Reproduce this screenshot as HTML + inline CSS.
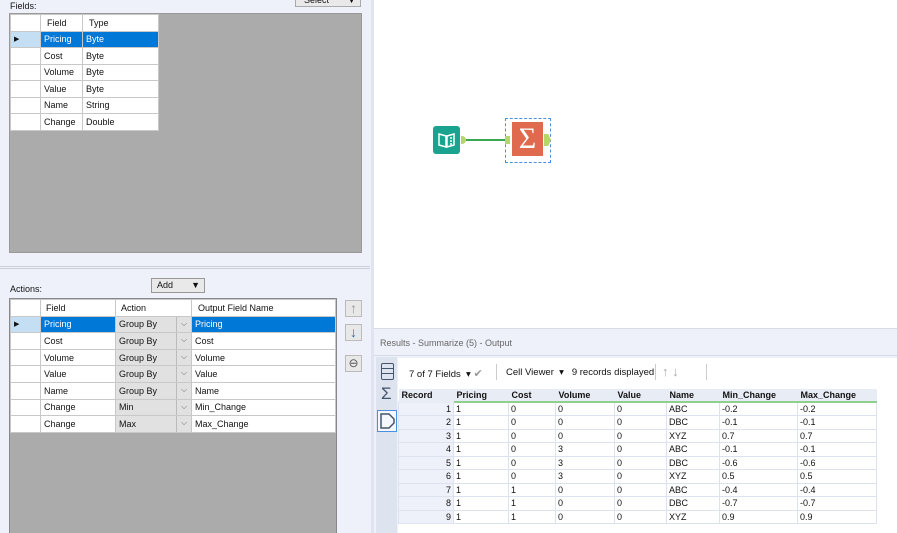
<!DOCTYPE html>
<html style="width:897px;height:533px;overflow:hidden"><head><style>
*{margin:0;padding:0;box-sizing:border-box}
body{width:897px;height:533px;overflow:hidden;position:relative;background:#fff;font-family:"Liberation Sans",sans-serif;font-size:9px;color:#111}
.abs{position:absolute}
table{border-collapse:collapse;position:absolute;font-size:9px}
td{border:1px solid #c8c8c8;padding:0 3px;white-space:nowrap;overflow:hidden;background:#fff}
.sel td.c{background:#0078d7;color:#fff}
.rh{background:#fff;border-color:#c8c8c8}
.dd{background:#e1e1e1;position:relative}
.dd:after{content:"⌵";position:absolute;right:0;top:0;width:14px;height:100%;border-left:1px solid #bbb;text-align:center;color:#666;font-size:8px;line-height:13px}
.rt td{border:1px solid #dce3ef;height:13.5px;line-height:12px;padding:0 2px}
.rt th{font-weight:bold;text-align:left;padding:0 3px;border-bottom:2px solid #8fd08f;background:#e8ecf4;height:13px}
</style></head><body>
<div class="abs" style="left:0;top:0;width:372px;height:533px;background:#eef1f9"></div>
<div class="abs" style="left:371px;top:0;width:3px;height:533px;background:#dfe4ef"></div>
<div class="abs" style="left:10px;top:1px">Fields:</div>
<div class="abs" style="left:295px;top:-6px;width:66px;height:13px;background:#e9e9e9;border:1px solid #aaa;padding-left:8px;line-height:11px">Select <span style="float:right;margin-right:4px">▼</span></div>
<div class="abs" style="left:9px;top:13px;width:353px;height:240px;background:#ababab;border:1px solid #999"></div>
<table style="left:10px;top:14px;width:149px">
<tr style="height:16.5px"><td class="rh" style="width:30px"></td><td style="width:42px;padding-left:6px">Field</td><td style="padding-left:6px">Type</td></tr>
<tr class="sel" style="height:16.5px"><td class="rh" style="background:#c4def4;font-size:7px">▶</td><td class="c">Pricing</td><td class="c">Byte</td></tr>
<tr style="height:16.5px"><td class="rh"></td><td>Cost</td><td>Byte</td></tr>
<tr style="height:16.5px"><td class="rh"></td><td>Volume</td><td>Byte</td></tr>
<tr style="height:16.5px"><td class="rh"></td><td>Value</td><td>Byte</td></tr>
<tr style="height:16.5px"><td class="rh"></td><td>Name</td><td>String</td></tr>
<tr style="height:16.5px"><td class="rh"></td><td>Change</td><td>Double</td></tr>
</table>
<div class="abs" style="left:0;top:266px;width:370px;height:3px;border-top:1px solid #c9ced8;border-bottom:1px solid #c9ced8"></div>
<div class="abs" style="left:10px;top:284px">Actions:</div>
<div class="abs" style="left:151px;top:278px;width:54px;height:15px;background:#e9e9e9;border:1px solid #999;padding-left:5px;line-height:13px">Add <span style="float:right;margin-right:4px">▼</span></div>
<div class="abs" style="left:9px;top:298px;width:328px;height:235px;background:#ababab;border:1px solid #888;border-bottom:none"></div>
<table style="left:10px;top:299px;width:326px">
<tr style="height:16.6px"><td class="rh" style="width:30px"></td><td style="width:75px;padding-left:5px">Field</td><td style="width:76px;padding-left:5px">Action</td><td style="padding-left:6px">Output Field Name</td></tr>
<tr class="sel" style="height:16.6px"><td class="rh" style="background:#c4def4;font-size:7px">▶</td><td class="c">Pricing</td><td class="dd">Group By</td><td class="c">Pricing</td></tr>
<tr style="height:16.6px"><td class="rh"></td><td>Cost</td><td class="dd">Group By</td><td>Cost</td></tr>
<tr style="height:16.6px"><td class="rh"></td><td>Volume</td><td class="dd">Group By</td><td>Volume</td></tr>
<tr style="height:16.6px"><td class="rh"></td><td>Value</td><td class="dd">Group By</td><td>Value</td></tr>
<tr style="height:16.6px"><td class="rh"></td><td>Name</td><td class="dd">Group By</td><td>Name</td></tr>
<tr style="height:16.6px"><td class="rh"></td><td>Change</td><td class="dd">Min</td><td>Min_Change</td></tr>
<tr style="height:16.6px"><td class="rh"></td><td>Change</td><td class="dd">Max</td><td>Max_Change</td></tr>
</table>
<div class="abs" style="left:345px;top:300px;width:17px;height:17px;border:1px solid #bbb;background:#e8e8e8;color:#999;text-align:center;font-size:14px;line-height:15px">↑</div>
<div class="abs" style="left:345px;top:324px;width:17px;height:17px;border:1px solid #bbb;background:#e8e8e8;color:#3a6ea5;text-align:center;font-size:14px;line-height:15px">↓</div>
<div class="abs" style="left:345px;top:355px;width:17px;height:17px;border:1px solid #bbb;background:#e8e8e8;color:#555;text-align:center;font-size:12px;line-height:15px">⊖</div>
<div class="abs" style="left:433px;top:126px;width:27px;height:28px;background:#1aa38f;border-radius:3px"></div>
<svg class="abs" style="left:433px;top:126px" width="27" height="28"><path d="M6 8 L13 10 L13 21 L6 19Z M21 8 L14 10 L14 21 L21 19Z" fill="none" stroke="#fff" stroke-width="1.5"/><circle cx="18" cy="12" r="1" fill="#fff"/><circle cx="18" cy="15" r="1" fill="#fff"/><circle cx="18" cy="18" r="1" fill="#fff"/></svg>
<div class="abs" style="left:461px;top:136px;width:5px;height:8px;background:#b5d66a;border-radius:0 4px 4px 0"></div>
<div class="abs" style="left:466px;top:139px;width:40px;height:2px;background:#3aa651"></div>
<div class="abs" style="left:505px;top:118px;width:46px;height:45px;border:1px dashed #4a90e2"></div>
<div class="abs" style="left:505px;top:136px;width:5px;height:8px;background:#b5d66a"></div>
<div class="abs" style="left:512px;top:122px;width:31px;height:34px;background:#e06a4e;color:#fff;font-size:30px;text-align:center;line-height:34px;font-family:'Liberation Serif',serif">Σ</div>
<div class="abs" style="left:544px;top:134px;width:7px;height:12px;background:#b5d66a;clip-path:polygon(0 0,60% 0,100% 50%,60% 100%,0 100%)"></div>
<div class="abs" style="left:374px;top:328px;width:523px;height:205px;background:#eef1f9;border-top:1px solid #d6dbe6"></div>
<div class="abs" style="left:380px;top:338px;color:#666">Results - Summarize (5) - Output</div>
<div class="abs" style="left:374px;top:355px;width:523px;height:1px;background:#d6dbe6"></div>
<div class="abs" style="left:376px;top:357px;width:21px;height:176px;background:#dde3ef"></div>
<div class="abs" style="left:381px;top:363px;width:13px;height:17px;border:1.5px solid #44546a;border-radius:2px"></div>
<div class="abs" style="left:381px;top:368px;width:13px;height:6px;border-top:1.5px solid #44546a;border-bottom:1.5px solid #44546a"></div>
<div class="abs" style="left:381px;top:385px;font-size:17px;color:#44546a;line-height:18px">Σ</div>
<div class="abs" style="left:377px;top:410px;width:20px;height:22px;border:1px solid #4a90e2;background:#f4f8fd"></div>
<svg class="abs" style="left:380px;top:413px" width="15" height="16"><path d="M1 1H9L14 6V10L9 15H1Z" fill="none" stroke="#44546a" stroke-width="1.5"/></svg>
<div class="abs" style="left:398px;top:358px;width:499px;height:30px;background:#fff"></div>
<div class="abs" style="left:409px;top:367px;font-size:9.5px">7 of 7 Fields &nbsp;▾ <span style="color:#999;font-size:11px">✔</span></div>
<div class="abs" style="left:496px;top:364px;width:1px;height:16px;background:#ccc"></div>
<div class="abs" style="left:506px;top:367px;font-size:9.5px">Cell Viewer &nbsp;▾ &nbsp;&nbsp;9 records displayed</div>
<div class="abs" style="left:655px;top:364px;width:1px;height:16px;background:#ccc"></div>
<div class="abs" style="left:662px;top:364px;color:#aaa;font-size:13px">↑ ↓</div>
<div class="abs" style="left:706px;top:364px;width:1px;height:16px;background:#ccc"></div>
<div class="abs" style="left:398px;top:388px;width:499px;height:145px;background:#fff"></div>
<table class="rt" style="left:398px;top:389px;width:479px">
<tr><th style="width:55px;border-bottom-color:#e8ecf4">Record</th><th style="width:55px">Pricing</th><th style="width:47px">Cost</th><th style="width:59px">Volume</th><th style="width:52px">Value</th><th style="width:53px">Name</th><th style="width:78px">Min_Change</th><th>Max_Change</th></tr>
<tr><td style="text-align:right;background:#eef1f9">1</td><td>1</td><td>0</td><td>0</td><td>0</td><td>ABC</td><td>-0.2</td><td>-0.2</td></tr>
<tr><td style="text-align:right;background:#eef1f9">2</td><td>1</td><td>0</td><td>0</td><td>0</td><td>DBC</td><td>-0.1</td><td>-0.1</td></tr>
<tr><td style="text-align:right;background:#eef1f9">3</td><td>1</td><td>0</td><td>0</td><td>0</td><td>XYZ</td><td>0.7</td><td>0.7</td></tr>
<tr><td style="text-align:right;background:#eef1f9">4</td><td>1</td><td>0</td><td>3</td><td>0</td><td>ABC</td><td>-0.1</td><td>-0.1</td></tr>
<tr><td style="text-align:right;background:#eef1f9">5</td><td>1</td><td>0</td><td>3</td><td>0</td><td>DBC</td><td>-0.6</td><td>-0.6</td></tr>
<tr><td style="text-align:right;background:#eef1f9">6</td><td>1</td><td>0</td><td>3</td><td>0</td><td>XYZ</td><td>0.5</td><td>0.5</td></tr>
<tr><td style="text-align:right;background:#eef1f9">7</td><td>1</td><td>1</td><td>0</td><td>0</td><td>ABC</td><td>-0.4</td><td>-0.4</td></tr>
<tr><td style="text-align:right;background:#eef1f9">8</td><td>1</td><td>1</td><td>0</td><td>0</td><td>DBC</td><td>-0.7</td><td>-0.7</td></tr>
<tr><td style="text-align:right;background:#eef1f9">9</td><td>1</td><td>1</td><td>0</td><td>0</td><td>XYZ</td><td>0.9</td><td>0.9</td></tr>
</table>
</body></html>
